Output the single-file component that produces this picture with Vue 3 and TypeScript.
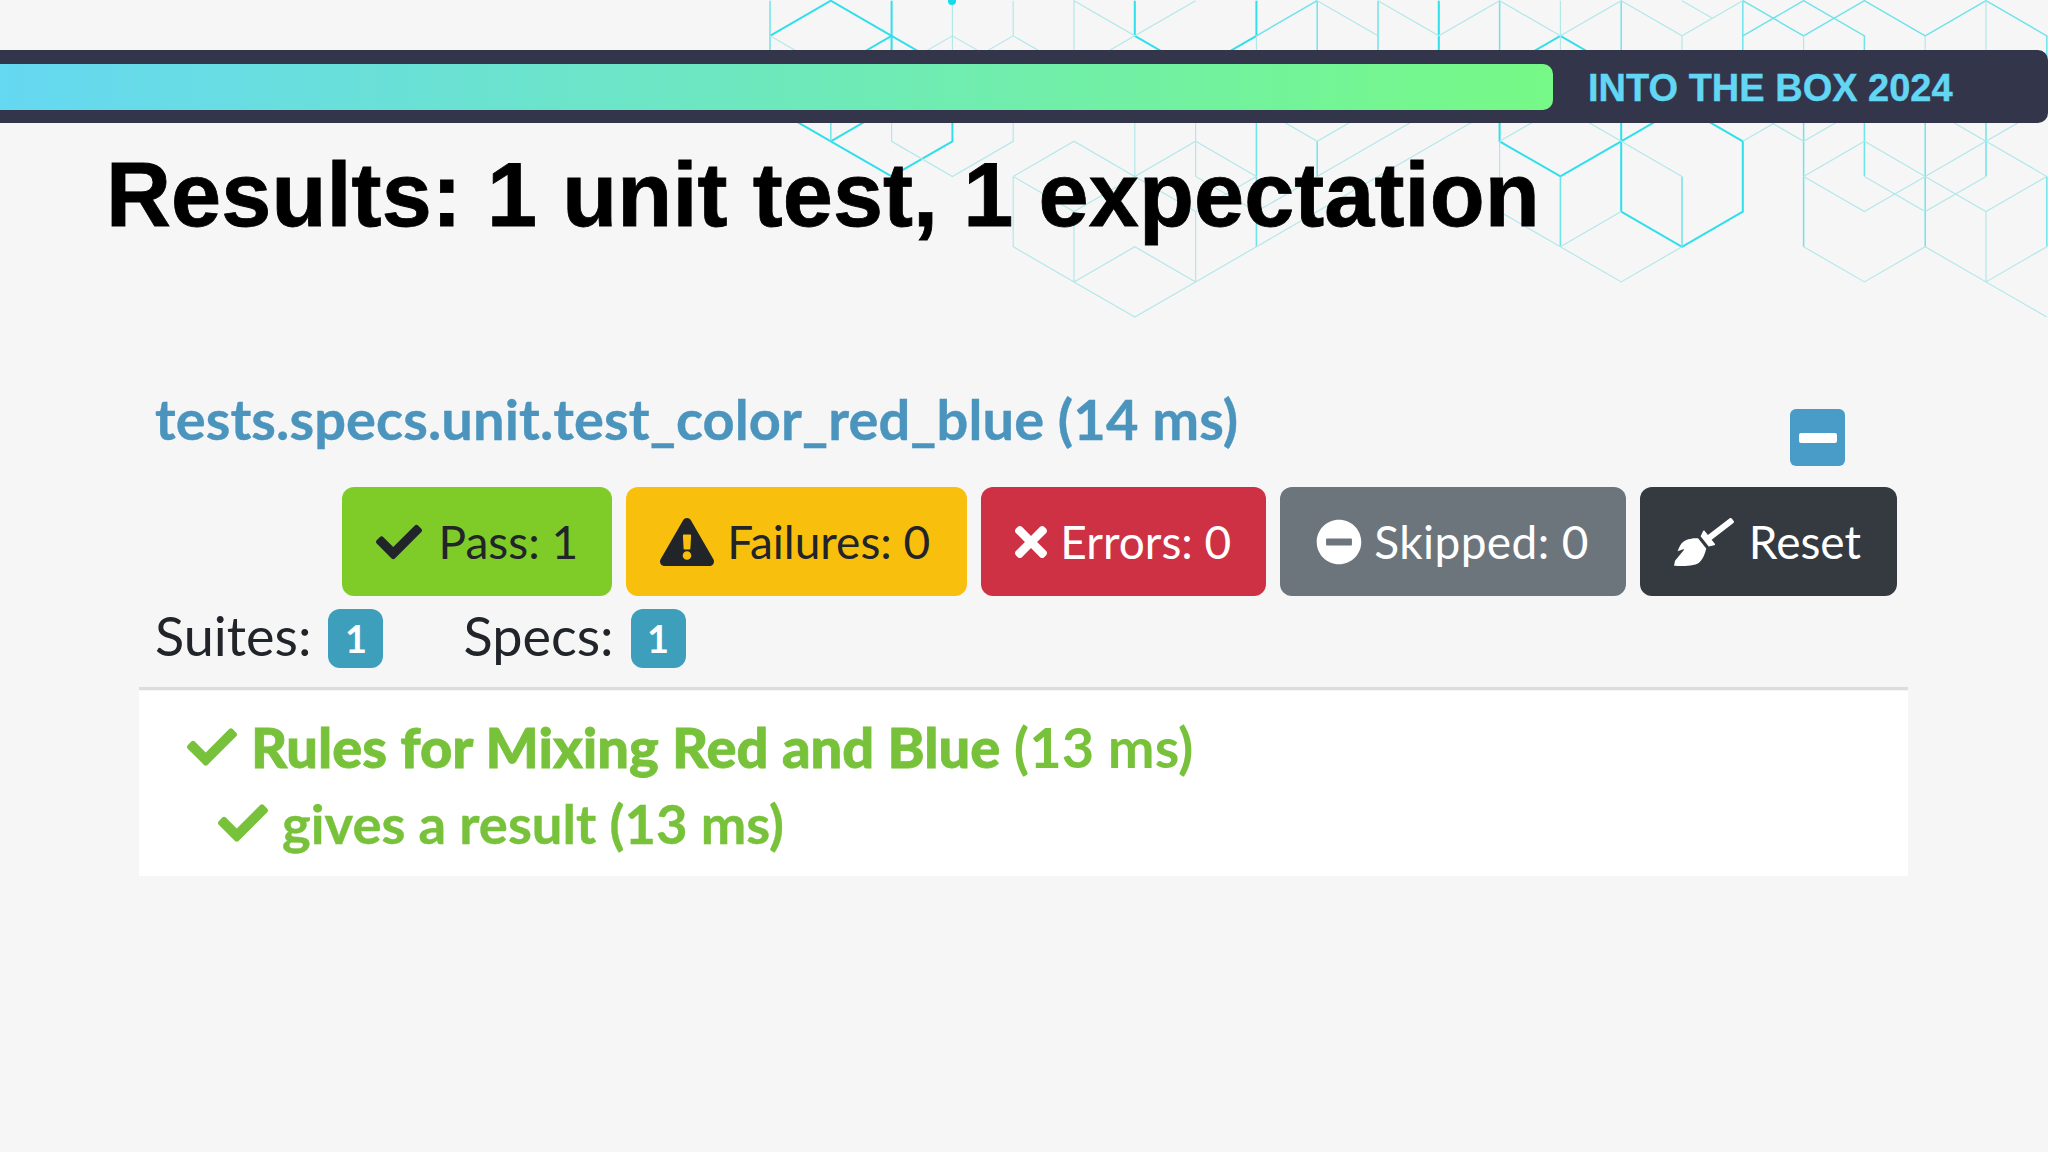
<script setup lang="ts">
type Tier = 'bright' | 'medium' | 'faint';

interface Segment {
  tier: Tier;
  path: number[];
}

interface Action {
  label: string;
  kind: string;
  icon: string;
  box: string;
  width: number;
}

const icons = {
  check:
    'M173.898 439.404l-166.4-166.4c-9.997-9.997-9.997-26.206 0-36.204l36.203-36.204c9.997-9.998 26.207-9.998 36.204 0L192 312.69 432.095 72.596c9.997-9.997 26.207-9.997 36.204 0l36.203 36.204c9.997 9.997 9.997 26.206 0 36.204l-294.4 294.401c-9.998 9.997-26.207 9.997-36.204-.001z',
  warning:
    'M569.517 440.013C587.975 472.007 564.806 512 527.94 512H48.054c-36.937 0-59.999-40.055-41.577-71.987L246.423 24c18.467-32.009 64.72-31.951 83.154 0l239.94 416.013zM288 354c-25.405 0-46 20.595-46 46s20.595 46 46 46 46-20.595 46-46-20.595-46-46-46zm-43.673-165.346l7.418 136c.347 6.364 5.609 11.346 11.982 11.346h48.546c6.373 0 11.635-4.982 11.982-11.346l7.418-136c.375-6.874-5.098-12.654-11.982-12.654h-63.383c-6.884 0-12.356 5.78-11.981 12.654z',
  times:
    'M242.72 256l100.07-100.07c12.28-12.28 12.28-32.19 0-44.48l-22.24-22.24c-12.28-12.28-32.19-12.28-44.48 0L176 189.28 75.93 89.21c-12.28-12.28-32.19-12.28-44.48 0L9.21 111.45c-12.28 12.28-12.28 32.19 0 44.48L109.28 256 9.21 356.07c-12.28 12.28-12.28 32.19 0 44.48l22.24 22.24c12.28 12.28 32.2 12.28 44.48 0L176 322.72l100.07 100.07c12.28 12.28 32.2 12.28 44.48 0l22.24-22.24c12.28-12.28 12.28-32.19 0-44.48L242.72 256z',
  minus:
    'M256 8C119 8 8 119 8 256s111 248 248 248 248-111 248-248S393 8 256 8zM124 296c-6.6 0-12-5.4-12-12v-56c0-6.6 5.4-12 12-12h264c6.6 0 12 5.4 12 12v56c0 6.6-5.4 12-12 12H124z',
  broom:
    'M256.47 216.77l86.73 109.18s-16.6 102.36-76.57 150.12C206.66 523.85 0 510.19 0 510.19s3.8-23.14 11-55.43l94.62-112.17c3.97-4.7-.87-11.62-6.65-9.5l-60.4 22.09c14.44-41.66 32.72-80.04 54.6-97.47 59.97-47.76 163.3-40.94 163.3-40.94zM636.53 31.03l-19.86-25c-5.49-6.9-15.52-8.05-22.41-2.56l-232.48 177.8-34.14-42.97c-5.09-6.41-15.14-5.21-18.59 2.21l-25.33 54.55 86.73 109.18 58.8-12.45c8-1.69 11.42-11.2 6.34-17.6l-34.09-42.92 232.48-177.8c6.89-5.48 8.04-15.53 2.55-22.44z'
};

const actions: Action[] = [
  { label: 'Pass: 1', kind: 'pass', icon: icons.check, box: '0 0 512 512', width: 46 },
  { label: 'Failures: 0', kind: 'fail', icon: icons.warning, box: '0 0 576 512', width: 54 },
  { label: 'Errors: 0', kind: 'error', icon: icons.times, box: '0 0 352 512', width: 32 },
  { label: 'Skipped: 0', kind: 'skip', icon: icons.minus, box: '0 0 512 512', width: 46 },
  { label: 'Reset', kind: 'reset', icon: icons.broom, box: '0 0 640 512', width: 60 }
];

const stats = [
  { label: 'Suites:', value: 1 },
  { label: 'Specs:', value: 1 }
];

// hexagon lattice, written as column,row pairs
const segments: Segment[] = [
  // above the bar
  ...[
    [0, 1, 1, 0, 2, 1, 3, 2],
    [2, 1, 1, 2],
    [2, 0, 2, 2],
    [6, 0, 6, 1, 7, 2],
    [8, 0, 8, 1, 7, 2],
    [11, 0, 11, 2],
    [12, 2, 13, 1, 14, 2]
  ].map(path => ({ tier: 'bright' as Tier, path })),
  ...[
    [0, 0, 0, 2],
    [9, 0, 9, 2],
    [10, 0, 10, 2],
    [12, 0, 12, 2],
    [14, 0, 14, 2],
    [16, 0, 16, 2],
    [8, 1, 9, 0],
    [16, 1, 17, 0, 18, 1, 18, 2],
    [16, 0, 17, 1, 18, 0, 19, 1, 20, 0, 21, 1, 21, 2]
  ].map(path => ({ tier: 'medium' as Tier, path })),
  ...[
    [0, 1, 1, 2],
    [3, 0, 3, 2],
    [4, 0, 4, 1],
    [2, 2, 3, 1, 4, 2],
    [3, 2, 4, 1, 5, 2],
    [5, 2, 5, 0, 6, 1, 7, 0],
    [6, 1, 5, 2],
    [8, 1, 8, 2],
    [9, 0, 10, 1],
    [10, 0, 11, 1, 12, 0, 13, 1, 14, 0, 15, 1, 16, 0],
    [13, 0, 13, 2],
    [15, 1, 15, 2],
    [15, 0, 15.5, 0.5],
    [17, 1, 17, 2],
    [19, 1, 19, 2],
    [20, 0, 20, 2]
  ].map(path => ({ tier: 'faint' as Tier, path })),
  // below the bar
  ...[
    [0, 3, 1, 4, 2, 5, 3, 4, 3, 3],
    [1, 4, 2, 3],
    [12, 3, 12, 4, 13, 5, 14, 4, 15, 3],
    [14, 3, 14, 6],
    [14, 6, 15, 7, 16, 6, 16, 4, 15, 3]
  ].map(path => ({ tier: 'bright' as Tier, path })),
  ...[
    [1, 3, 1, 4],
    [8, 3, 8, 7],
    [9, 4, 9, 5],
    [13, 5, 13, 7],
    [15, 5, 15, 7],
    [17, 3, 17, 7],
    [18, 3, 18, 5],
    [19, 3, 19, 7],
    [20, 3, 20, 5],
    [21, 5, 21, 7]
  ].map(path => ({ tier: 'medium' as Tier, path })),
  ...[
    [2, 3, 2, 4, 3, 5, 4, 4, 4, 3],
    [6, 3, 6, 5],
    [7, 3, 7, 5, 8, 6],
    [4, 5, 5, 4, 6, 5, 7, 4, 8, 5, 7, 6],
    [4, 5, 5, 6, 6, 5, 7, 6, 7, 8],
    [5, 6, 5, 8],
    [4, 5, 4, 7, 5, 8, 6, 9, 7, 8, 8, 7, 9, 6, 10, 5, 11, 4, 12, 3],
    [5, 8, 6, 7, 7, 8],
    [8, 6, 9, 5, 10, 4, 11, 3],
    [8, 3, 9, 4, 10, 3],
    [12, 4, 13, 3, 14, 4, 15, 5],
    [12, 4, 12, 6, 13, 7, 14, 8, 15, 7],
    [13, 7, 14, 6],
    [16, 4, 17, 3],
    [16, 3, 17, 4, 18, 3],
    [17, 5, 18, 4, 19, 5, 20, 6, 21, 5],
    [18, 5, 19, 6, 20, 5],
    [17, 5, 18, 6, 19, 5, 20, 4, 21, 5],
    [19, 3, 20, 4, 21, 3],
    [17, 7, 18, 8, 19, 7, 20, 8, 21, 7],
    [20, 6, 20, 8, 21, 9]
  ].map(path => ({ tier: 'faint' as Tier, path }))
];

function points(path: number[]): string {
  const out: string[] = [];
  for (let i = 0; i < path.length; i += 2) {
    out.push(`${770 + path[i] * 60.8},${0.7 + path[i + 1] * 35.15}`);
  }
  return out.join(' ');
}
</script>

<template>
  <div class="slide">
    <svg class="lattice" width="2048" height="330" viewBox="0 0 2048 330" aria-hidden="true">
      <polyline
        v-for="(seg, i) in segments"
        :key="i"
        :class="seg.tier"
        :points="points(seg.path)"
      />
      <circle cx="952" cy="1" r="4" fill="#12dcec" />
    </svg>

    <header class="bar">
      <div class="progress"></div>
      <span class="event">INTO THE BOX 2024</span>
    </header>

    <h1>Results: 1 unit test, 1 expectation</h1>

    <section class="report">
      <div class="report-head">
        <h2>tests.specs.unit.test_color_red_blue (14 ms)</h2>
        <button class="collapse" type="button" aria-label="Collapse"><i></i></button>
      </div>

      <div class="actions">
        <button v-for="a in actions" :key="a.kind" type="button" class="action" :class="a.kind">
          <svg :viewBox="a.box" :style="{ width: a.width + 'px' }" fill="currentColor" aria-hidden="true">
            <path :d="a.icon" />
          </svg>
          <span>{{ a.label }}</span>
        </button>
      </div>

      <div class="stats">
        <div v-for="s in stats" :key="s.label" class="stat">
          <span>{{ s.label }}</span>
          <b>{{ s.value }}</b>
        </div>
      </div>

      <div class="results">
        <div class="suite">
          <svg viewBox="0 0 512 512" fill="currentColor" aria-hidden="true"><path :d="icons.check" /></svg>
          <span><strong>Rules for Mixing Red and Blue</strong> (13 ms)</span>
        </div>
        <div class="spec">
          <svg viewBox="0 0 512 512" fill="currentColor" aria-hidden="true"><path :d="icons.check" /></svg>
          <span>gives a result (13 ms)</span>
        </div>
      </div>
    </section>
  </div>
</template>

<style>
body {
  background: #f6f6f7;
}
</style>

<style scoped>
.slide {
  position: relative;
  width: 2048px;
  height: 1152px;
  overflow: hidden;
  padding-top: 50px;
  box-sizing: border-box;
  background: #f6f6f7;
  font-family: Lato, "Liberation Sans", sans-serif;
}

.lattice {
  position: absolute;
  top: 0;
  left: 0;
  fill: none;
}

.lattice .bright {
  stroke: #2fdfea;
  stroke-width: 2;
}

.lattice .medium {
  stroke: #6fe3ea;
  stroke-width: 1.5;
}

.lattice .faint {
  stroke: #b3e8e8;
  stroke-width: 1.2;
}

.bar {
  position: relative;
  display: flex;
  align-items: center;
  height: 73px;
  background: #33364a;
  border-radius: 0 10px 10px 0;
}

.progress {
  width: 1553px;
  height: 46px;
  border-radius: 0 10px 10px 0;
  background: linear-gradient(90deg, #65d8f2, #76f986);
}

.event {
  margin: 4px 0 0 35px;
  font: bold 38px "Liberation Sans", sans-serif;
  color: #62d6f3;
  -webkit-text-stroke: 0.4px #62d6f3;
}

h1 {
  position: relative;
  margin: 18px 0 0 106px;
  font: bold 90px/1.2 "Liberation Sans", sans-serif;
  letter-spacing: 0.1px;
  color: #000;
  -webkit-text-stroke: 0.8px #000;
}

.report {
  position: relative;
  width: 1769px;
  margin: 139px 0 0 139px;
}

.report-head {
  display: flex;
  justify-content: space-between;
  padding: 0 63px 0 16px;
  height: 88px;
}

h2 {
  margin: 0;
  font-size: 56px;
  line-height: 62px;
  font-weight: 700;
  letter-spacing: 0.1px;
  color: #4a94bd;
  -webkit-text-stroke: 0.4px #4a94bd;
}

.collapse {
  display: flex;
  align-items: center;
  justify-content: center;
  width: 55px;
  height: 57px;
  margin-top: 21px;
  padding: 0;
  border: none;
  border-radius: 6px;
  background: #4a9cc8;
}

.collapse i {
  width: 38px;
  height: 10px;
  border-radius: 2px;
  background: #fff;
}

.actions {
  display: flex;
  justify-content: flex-end;
  gap: 14px;
  padding: 11px 11px 0 0;
}

.action {
  display: flex;
  align-items: center;
  gap: 15px;
  height: 109px;
  padding: 0 36px 0 34px;
  border: none;
  border-radius: 12px;
  font: 400 46px Lato, sans-serif;
}

.action svg {
  height: 54px;
  flex: none;
}

.pass {
  gap: 17px;
  padding-right: 34px;
  background: #7fcc28;
  color: #212529;
}

.fail {
  gap: 13px;
  padding-right: 37px;
  background: #f8bf0d;
  color: #212529;
}

.error {
  gap: 13px;
  padding-right: 35px;
  background: #cf3144;
  color: #fff;
}

.skip {
  gap: 12px;
  padding: 0 37px 0 36px;
  letter-spacing: 0.4px;
  background: #6c757c;
  color: #fff;
}

.reset {
  background: #343a40;
  color: #fff;
}

.stats {
  display: flex;
  gap: 80px;
  padding: 13px 0 0 16px;
  box-sizing: border-box;
  border-bottom: 3px solid #dcdcdc;
  height: 94px;
}

.stat {
  display: flex;
  align-items: flex-start;
  gap: 17px;
  font-size: 54px;
  color: #212529;
}

.stat span {
  line-height: 54px;
}

.stat b {
  width: 55px;
  height: 59px;
  border-radius: 12px;
  background: #3d9fbc;
  color: #fff;
  font-size: 38px;
  line-height: 59px;
  text-align: center;
}

.results {
  height: 185px;
  margin-top: 1px;
  padding-top: 26px;
  box-sizing: border-box;
  background: #fff;
  color: #77c23a;
  font-size: 56px;
  line-height: 60px;
  font-weight: 700;
}

.results svg {
  width: 50px;
  height: 50px;
  flex: none;
}

.suite,
.spec {
  display: flex;
  align-items: center;
  gap: 14px;
}

.suite {
  padding-left: 48px;
}

.suite strong {
  -webkit-text-stroke: 0.8px #77c23a;
}

.spec {
  padding-left: 79px;
  margin-top: 16px;
  font-size: 54.4px;
  -webkit-text-stroke: 0.4px #77c23a;
}
</style>
